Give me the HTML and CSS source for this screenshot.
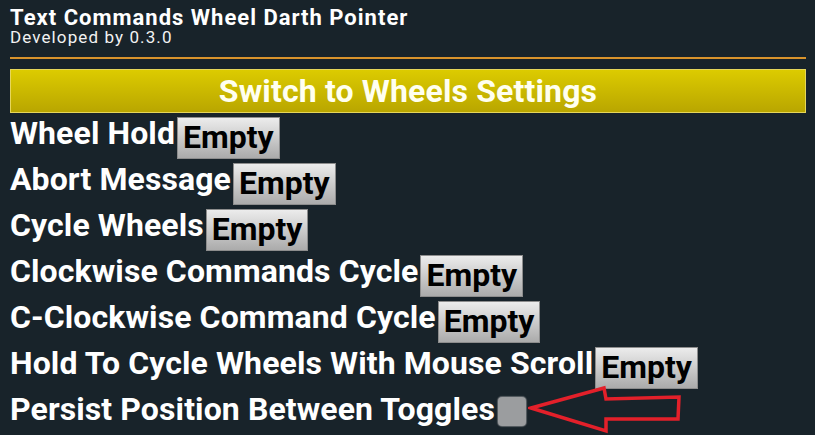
FILE: index.html
```html
<!DOCTYPE html>
<html>
<head>
<meta charset="utf-8">
<link rel="stylesheet" href="styles.css">
</head>
<body>
<div class="page">
  <header class="header">
    <div class="title">Text Commands Wheel Darth Pointer</div>
    <div class="subtitle">Developed by 0.3.0</div>
  </header>
  <div class="rule"></div>
  <div class="switch-btn"><span class="switch-text">Switch to Wheels Settings</span></div>
  <div class="rows">
    <div class="row"><span class="label">Wheel Hold</span><span class="key">Empty</span></div>
    <div class="row"><span class="label">Abort Message</span><span class="key">Empty</span></div>
    <div class="row"><span class="label">Cycle Wheels</span><span class="key">Empty</span></div>
    <div class="row"><span class="label">Clockwise Commands Cycle</span><span class="key">Empty</span></div>
    <div class="row"><span class="label">C-Clockwise Command Cycle</span><span class="key">Empty</span></div>
    <div class="row"><span class="label">Hold To Cycle Wheels With Mouse Scroll</span><span class="key">Empty</span></div>
    <div class="row"><span class="label">Persist Position Between Toggles</span><span class="check"></span></div>
  </div>
  <svg class="arrow" width="160" height="52" viewBox="0 0 160 52">
    <polygon points="3,23 76,3 78,14 151,12 150,34 78,34 78,46" fill="none" stroke="#e3202a" stroke-width="3.5" stroke-linejoin="miter"/>
  </svg>
</div>
</body>
</html>
```

FILE: styles.css
```css
html, body {
  margin: 0;
  padding: 0;
  background: #18232a;
}
body {
  width: 815px;
  height: 435px;
  overflow: hidden;
  font-family: Roboto, "Noto Sans", sans-serif;
  color: #ffffff;
}
.page {
  position: relative;
  padding: 0 9px 0 10px;
  display: flex;
  flex-direction: column;
}
.header {
  display: flex;
  flex-direction: column;
  padding-top: 6px;
}
.title {
  font-size: 22px;
  font-weight: 700;
  line-height: 23px;
  letter-spacing: 1px;
}
.subtitle {
  font-size: 17px;
  font-weight: 400;
  line-height: 16px;
  letter-spacing: 1.1px;
  color: #f2f2f2;
}
.rule {
  height: 2px;
  background: #d8932c;
  margin-top: 12px;
}
.switch-btn {
  margin-top: 10px;
  height: 42px;
  border: 1px solid #e6d65a;
  background: linear-gradient(#dccb00, #b9a600);
  display: flex;
  align-items: center;
  justify-content: center;
}
.switch-text {
  font-size: 32px;
  font-weight: 700;
  color: #fffff0;
  letter-spacing: 0.15px;
  line-height: 42px;
}
.rows {
  display: flex;
  flex-direction: column;
  margin-top: 2px;
}
.row {
  display: flex;
  align-items: flex-start;
  height: 46px;
}
.label {
  font-size: 32px;
  font-weight: 700;
  line-height: 36px;
  letter-spacing: 0.1px;
  white-space: nowrap;
}
.key {
  margin-left: 2px;
  margin-top: 2px;
  height: 42px;
  box-sizing: border-box;
  padding: 0 5px;
  border: 1px solid #8d8d8d;
  background: linear-gradient(#ececec, #ababab);
  color: #000;
  font-size: 32px;
  font-weight: 700;
  line-height: 38px;
}
.check {
  margin-left: 3px;
  margin-top: 6px;
  width: 28px;
  height: 29px;
  border-radius: 4px;
  background: #9b9d9f;
  box-shadow: 0 0 1px 1px rgba(155,157,159,0.5);
}
.arrow {
  position: absolute;
  left: 528px;
  top: 385px;
}
```
